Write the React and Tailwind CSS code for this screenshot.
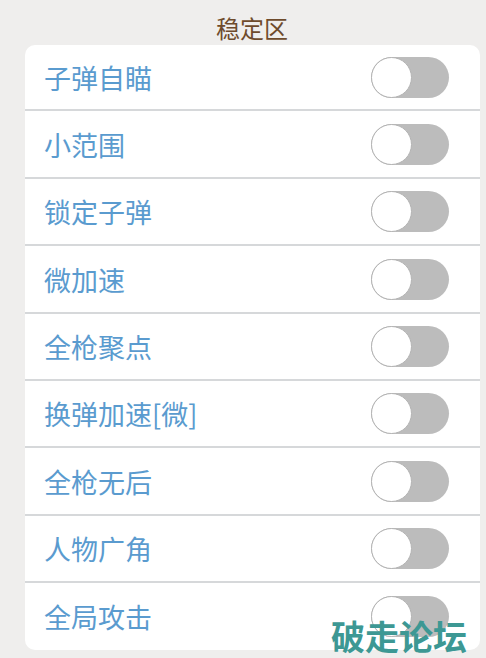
import React from 'react';

const items = [
  { label: '子弹自瞄', h: 'h-[66px]' },
  { label: '小范围', h: 'h-[68px]' },
  { label: '锁定子弹', h: 'h-[67px]' },
  { label: '微加速', h: 'h-[68px]' },
  { label: '全枪聚点', h: 'h-[67px]' },
  { label: '换弹加速[微]', h: 'h-[67px]' },
  { label: '全枪无后', h: 'h-[68px]' },
  { label: '人物广角', h: 'h-[67px]' },
  { label: '全局攻击', h: 'h-[67px]' },
];

const Toggle = () => (
  <div className="relative w-[78px] h-[41px] rounded-full bg-[#bcbcbc]">
    <div className="absolute left-0 top-0 w-[41px] h-[41px] rounded-full bg-white border border-[#b3b3b3]" />
  </div>
);

const App = () => (
  <div
    className="relative w-[486px] h-[658px] bg-[#efeeed] overflow-hidden"
    style={{ fontFamily: '"Noto Sans CJK SC", "Noto Sans", sans-serif' }}
  >
    <div className="h-[45px] flex items-center justify-center pl-[18px] pt-[10px] text-[24px] leading-none text-[#6e4b2c]">
      稳定区
    </div>
    <div className="ml-[25px] mr-[6px] bg-white rounded-[10px] overflow-hidden">
      {items.map((item, i) => (
        <div
          key={item.label}
          className={`flex items-center justify-between pl-[19px] pr-[31px] ${item.h} ${
            i < items.length - 1 ? 'border-b-2 border-[#d6d8da]' : ''
          }`}
        >
          <span className="text-[27px] leading-none text-[#5a9bcf]">{item.label}</span>
          <Toggle />
        </div>
      ))}
    </div>
    <div className="absolute left-[331px] top-[619px] text-[34px] font-bold leading-none text-[#3d9894]">
      破走论坛
    </div>
  </div>
);

export default App;
